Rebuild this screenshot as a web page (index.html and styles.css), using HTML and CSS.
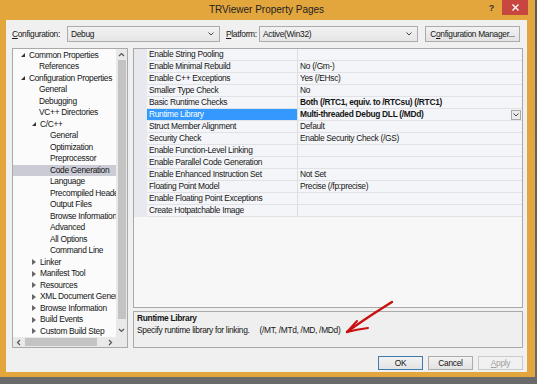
FILE: index.html
```html
<!DOCTYPE html>
<html lang="en">
<head>
    <meta charset="UTF-8">
    <meta name="viewport" content="width=device-width, initial-scale=1.0">
    <title>TRViewer Property Pages</title>
    <link rel="stylesheet" href="styles.css">
</head>
<body>
    <div class="window">
        <!-- Title bar -->
        <div class="titlebar">
            <div></div>
            <div class="title">TRViewer Property Pages</div>
            <div class="caption">
                <span class="help">?</span>
                <span class="close">
                    <svg width="7" height="7" viewBox="0 0 7 7"><path d="M0.5,0.5 L6.5,6.5 M6.5,0.5 L0.5,6.5" stroke="#fff" stroke-width="1.3"/></svg>
                </span>
            </div>
        </div>

        <div class="client">
            <!-- Configuration / Platform -->
            <div class="config-row">
                <span class="lbl lbl-config"><u>C</u>onfiguration:</span>
                <div class="combo combo-config">
                    <span>Debug</span>
                    <svg class="chev" width="6" height="4" viewBox="0 0 6 4"><path d="M0.5,0.5 L3,3 L5.5,0.5" fill="none" stroke="#444" stroke-width="1"/></svg>
                </div>
                <span class="lbl lbl-platform"><u>P</u>latform:</span>
                <div class="combo combo-platform">
                    <span>Active(Win32)</span>
                    <svg class="chev" width="6" height="4" viewBox="0 0 6 4"><path d="M0.5,0.5 L3,3 L5.5,0.5" fill="none" stroke="#444" stroke-width="1"/></svg>
                </div>
                <div class="btn btn-manager">C<u>o</u>nfiguration Manager...</div>
            </div>

            <div class="main">
                <!-- Tree -->
                <div class="tree">
                    <div class="tree-items">
                        <div class="node lv0"><span class="exp open"></span>Common Properties</div>
                        <div class="node lv1"><span class="exp"></span>References</div>
                        <div class="node lv0"><span class="exp open"></span>Configuration Properties</div>
                        <div class="node lv1"><span class="exp"></span>General</div>
                        <div class="node lv1"><span class="exp"></span>Debugging</div>
                        <div class="node lv1"><span class="exp"></span>VC++ Directories</div>
                        <div class="node lv1"><span class="exp open"></span>C/C++</div>
                        <div class="node lv2"><span class="exp"></span>General</div>
                        <div class="node lv2"><span class="exp"></span>Optimization</div>
                        <div class="node lv2"><span class="exp"></span>Preprocessor</div>
                        <div class="node lv2 selected"><span class="exp"></span>Code Generation</div>
                        <div class="node lv2"><span class="exp"></span>Language</div>
                        <div class="node lv2"><span class="exp"></span>Precompiled Headers</div>
                        <div class="node lv2"><span class="exp"></span>Output Files</div>
                        <div class="node lv2"><span class="exp"></span>Browse Information</div>
                        <div class="node lv2"><span class="exp"></span>Advanced</div>
                        <div class="node lv2"><span class="exp"></span>All Options</div>
                        <div class="node lv2"><span class="exp"></span>Command Line</div>
                        <div class="node lv1"><span class="exp closed"></span>Linker</div>
                        <div class="node lv1"><span class="exp closed"></span>Manifest Tool</div>
                        <div class="node lv1"><span class="exp closed"></span>Resources</div>
                        <div class="node lv1"><span class="exp closed"></span>XML Document Generator</div>
                        <div class="node lv1"><span class="exp closed"></span>Browse Information</div>
                        <div class="node lv1"><span class="exp closed"></span>Build Events</div>
                        <div class="node lv1"><span class="exp closed"></span>Custom Build Step</div>
                    </div>
                    <div class="vscroll">
                        <svg width="7" height="5" viewBox="0 0 7 5"><path d="M1,4 L3.5,1.5 L6,4" fill="none" stroke="#555" stroke-width="1.2"/></svg>
                        <div class="vthumb"></div>
                        <svg width="7" height="5" viewBox="0 0 7 5"><path d="M1,1 L3.5,3.5 L6,1" fill="none" stroke="#555" stroke-width="1.2"/></svg>
                    </div>
                    <div class="hscroll">
                        <svg width="5" height="7" viewBox="0 0 5 7"><path d="M4,1 L1.5,3.5 L4,6" fill="none" stroke="#555" stroke-width="1.2"/></svg>
                        <div class="hthumb"></div>
                        <svg width="5" height="7" viewBox="0 0 5 7"><path d="M1,1 L3.5,3.5 L1,6" fill="none" stroke="#555" stroke-width="1.2"/></svg>
                    </div>
                    <div class="corner"></div>
                </div>

                <div class="right">
                    <!-- Property grid -->
                    <div class="grid">
                        <div class="row"><div class="gut"></div><div class="name">Enable String Pooling</div><div class="val"></div></div>
                        <div class="row"><div class="gut"></div><div class="name">Enable Minimal Rebuild</div><div class="val">No (/Gm-)</div></div>
                        <div class="row"><div class="gut"></div><div class="name">Enable C++ Exceptions</div><div class="val">Yes (/EHsc)</div></div>
                        <div class="row"><div class="gut"></div><div class="name">Smaller Type Check</div><div class="val">No</div></div>
                        <div class="row"><div class="gut"></div><div class="name">Basic Runtime Checks</div><div class="val bold">Both (/RTC1, equiv. to /RTCsu) (/RTC1)</div></div>
                        <div class="row active"><div class="gut"></div><div class="name">Runtime Library</div><div class="val bold">Multi-threaded Debug DLL (/MDd)<span class="drop"><svg width="6" height="4" viewBox="0 0 6 4"><path d="M0.5,0.5 L3,3 L5.5,0.5" fill="none" stroke="#444" stroke-width="1"/></svg></span></div></div>
                        <div class="row"><div class="gut"></div><div class="name">Struct Member Alignment</div><div class="val">Default</div></div>
                        <div class="row"><div class="gut"></div><div class="name">Security Check</div><div class="val">Enable Security Check (/GS)</div></div>
                        <div class="row"><div class="gut"></div><div class="name">Enable Function-Level Linking</div><div class="val"></div></div>
                        <div class="row"><div class="gut"></div><div class="name">Enable Parallel Code Generation</div><div class="val"></div></div>
                        <div class="row"><div class="gut"></div><div class="name">Enable Enhanced Instruction Set</div><div class="val">Not Set</div></div>
                        <div class="row"><div class="gut"></div><div class="name">Floating Point Model</div><div class="val">Precise (/fp:precise)</div></div>
                        <div class="row"><div class="gut"></div><div class="name">Enable Floating Point Exceptions</div><div class="val"></div></div>
                        <div class="row"><div class="gut"></div><div class="name">Create Hotpatchable Image</div><div class="val"></div></div>
                    </div>

                    <!-- Description -->
                    <div class="desc">
                        <div class="desc-title">Runtime Library</div>
                        <div class="desc-text">Specify runtime library for linking.<span class="switches">(/MT, /MTd, /MD, /MDd)</span></div>
                    </div>
                </div>
            </div>

            <div class="buttons">
                <div class="btn btn-default">OK</div>
                <div class="btn">Cancel</div>
                <div class="btn disabled"><u>A</u>pply</div>
            </div>
        </div>
    </div>

    <!-- hand drawn annotation -->
    <svg class="arrow" width="537" height="384" viewBox="0 0 537 384">
        <path d="M392,302 C381,309 366,318 347,332" fill="none" stroke="#c8100e" stroke-width="2.4" stroke-linecap="round"/>
        <path d="M347,332 L357,321" fill="none" stroke="#c8100e" stroke-width="2" stroke-linecap="round"/>
        <path d="M347,332 C355,330 361,329 368,328" fill="none" stroke="#c8100e" stroke-width="2" stroke-linecap="round"/>
    </svg>
</body>
</html>
```

FILE: styles.css
```css
body {
    margin: 0;
    width: 537px;
    height: 384px;
    overflow: hidden;
    position: relative;
    background: linear-gradient(#5a5a5a, #6a6a6a);
    font-family: "Liberation Sans", Arial, sans-serif;
    font-size: 8.4px;
    letter-spacing: -0.3px;
    color: #151515;
}
.window {
    width: 535px;
    height: 377px;
    box-sizing: border-box;
    background: #e2a63d;
    padding: 0 8px 5px 6px;
    display: flex;
    flex-direction: column;
}
.titlebar {
    height: 20px;
    display: grid;
    grid-template-columns: 1fr auto 1fr;
    align-items: start;
}
.title {
    font-size: 10px;
    letter-spacing: 0;
    color: #222;
    line-height: 20px;
}
.caption {
    justify-self: end;
    display: flex;
    align-items: flex-start;
    margin-right: -1px;
}
.help {
    font-size: 9px;
    font-weight: bold;
    color: #333;
    line-height: 16px;
    margin-right: 8px;
}
.close {
    width: 26px;
    height: 15px;
    background: #c7463f;
    display: flex;
    align-items: center;
    justify-content: center;
}
.client {
    flex: 1;
    background: #f0f0f0;
    padding: 6px 4px 2px 6px;
    display: flex;
    flex-direction: column;
}
.config-row {
    height: 16px;
    display: flex;
    align-items: center;
}
.lbl-config {
    width: 55px;
}
.lbl-platform {
    width: 33px;
    margin-left: 6px;
}
.combo {
    height: 16px;
    box-sizing: border-box;
    border: 1px solid #acacac;
    background: linear-gradient(#f2f2f2, #e6e6e6);
    display: flex;
    align-items: center;
    justify-content: space-between;
    padding: 0 5px 0 3px;
}
.combo-config {
    width: 153px;
}
.combo-platform {
    width: 159px;
}
.btn {
    height: 14px;
    width: 45px;
    box-sizing: border-box;
    border: 1px solid #acacac;
    background: linear-gradient(#f2f2f2, #e3e3e3);
    display: flex;
    align-items: center;
    justify-content: center;
}
.btn-manager {
    width: 95px;
    height: 16px;
    margin-left: 7px;
}
.main {
    margin-top: 6px;
    height: 300px;
    display: flex;
    gap: 5px;
}
.tree {
    width: 116px;
    box-sizing: border-box;
    border: 1px solid #a9a9a9;
    background: #fbfbfb;
    display: grid;
    grid-template-columns: 1fr 11px;
    grid-template-rows: 1fr 10px;
    overflow: hidden;
}
.tree-items {
    overflow: hidden;
    white-space: nowrap;
    padding-top: 0.5px;
}
.node {
    height: 11.5px;
    line-height: 11.5px;
    display: flex;
    align-items: center;
}
.node.selected {
    background: #cbcbd5;
}
.lv0 { padding-left: 7px; }
.lv1 { padding-left: 18px; }
.lv2 { padding-left: 29px; }
.exp {
    width: 5px;
    height: 5px;
    margin-right: 3px;
    flex: none;
    box-sizing: border-box;
}
.exp.open {
    width: 0;
    height: 0;
    border-style: solid;
    border-width: 0 0 4px 4px;
    border-color: transparent transparent #333 transparent;
    margin-right: 4px;
    margin-left: 1px;
}
.exp.closed {
    width: 0;
    height: 0;
    border-style: solid;
    border-width: 3px 0 3px 4px;
    border-color: transparent transparent transparent #666;
    margin-right: 4px;
    margin-left: 1px;
}
.vscroll {
    background: #e9e9e9;
    display: flex;
    flex-direction: column;
    align-items: center;
    padding: 3px 0 4px;
}
.vthumb {
    width: 8px;
    flex: 1;
    background: #c3c3c3;
    margin: 3px 0 9px;
}
.hscroll {
    background: #e9e9e9;
    display: flex;
    align-items: center;
    padding: 0 3px 0 3px;
}
.hthumb {
    width: 72px;
    height: 8px;
    background: #c3c3c3;
    margin: 0 auto 0 4px;
}
.corner {
    background: #e9e9e9;
}
.right {
    width: 390px;
    display: flex;
    flex-direction: column;
    gap: 3px;
}
.grid {
    height: 260px;
    box-sizing: border-box;
    border: 1px solid #a9a9a9;
    background: #f7f7f7;
}
.row {
    height: 12px;
    display: flex;
    white-space: nowrap;
}
.gut {
    width: 13px;
    background: #e8e9ee;
}
.name,
.val {
    line-height: 11px;
    border-bottom: 1px solid #e1e2e6;
    padding-left: 2px;
    background: #f4f5f8;
}
.name {
    width: 148px;
    border-right: 1px solid #dcdde2;
}
.val {
    flex: 1;
    display: flex;
    align-items: center;
    justify-content: space-between;
    padding-right: 1px;
}
.bold {
    font-weight: bold;
}
.row.active .name {
    background: #3399ff;
    color: #fff;
}
.drop {
    width: 10px;
    height: 10px;
    box-sizing: border-box;
    border: 1px solid #a8a8a8;
    background: #ececec;
    display: flex;
    align-items: center;
    justify-content: center;
}
.desc {
    flex: 1;
    box-sizing: border-box;
    border: 1px solid #a9a9a9;
    background: #efefef;
    padding: 1px 3px;
    line-height: 11.5px;
}
.desc-title {
    font-weight: bold;
}
.switches {
    margin-left: 10px;
}
.buttons {
    margin-top: 8px;
    display: flex;
    justify-content: flex-end;
    gap: 5px;
}
.btn-default {
    border-color: #3d7bad;
}
.btn.disabled {
    color: #a2a2a2;
    border-color: #cacaca;
    background: #f1f1f1;
}
.arrow {
    position: absolute;
    left: 0;
    top: 0;
    pointer-events: none;
}
```
